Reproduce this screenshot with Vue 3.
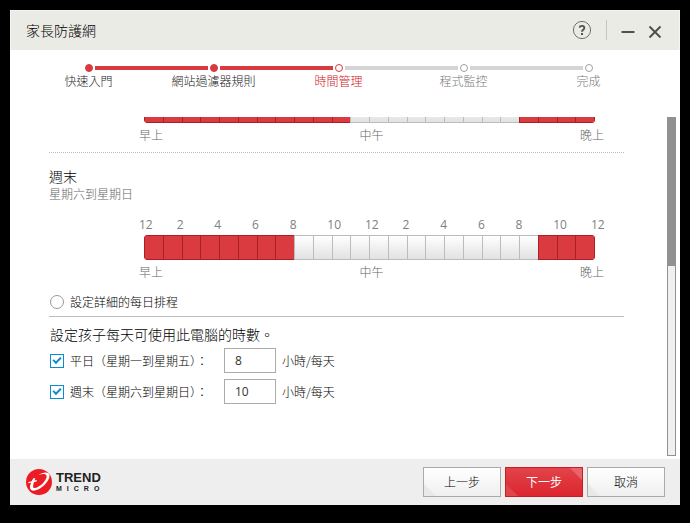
<script setup>
import { ref } from 'vue'

const steps = [
  { label: '快速入門', state: 'done' },
  { label: '網站過濾器規則', state: 'done' },
  { label: '時間管理', state: 'current' },
  { label: '程式監控', state: 'todo' },
  { label: '完成', state: 'todo' },
]

const hourMarks = [12, 2, 4, 6, 8, 10, 12, 2, 4, 6, 8, 10, 12]
const dayMarks = ['早上', '中午', '晚上']

// each slot is one hour, true = blocked
const makeSlots = (from, to) => Array.from({ length: 24 }, (_, h) => h < from || h >= to)

const weekdaySlots = ref(makeSlots(11, 20))
const weekendSlots = ref(makeSlots(8, 21))

const scheduleMode = ref('simple')
const limits = ref([
  { id: 'weekday', label: '平日（星期一到星期五）：', enabled: true, hours: '8' },
  { id: 'weekend', label: '週末（星期六到星期日）：', enabled: true, hours: '10' },
])

function toggle(slots, i) {
  slots[i] = !slots[i]
}
</script>

<template>
  <div class="screen">
    <main class="dialog" lang="zh-TW">
      <header class="titlebar">
        <h1 class="titlebar__title">家長防護網</h1>
        <button class="icon-btn icon-btn--help" aria-label="說明">
          <svg width="20" height="20" viewBox="0 0 20 20" fill="none" stroke="#505050">
            <circle cx="10" cy="10" r="8.6" stroke="#707070" stroke-width="1" />
            <path d="M7.5 7.6C8 5.2 12.3 5.3 12.3 7.9c0 1.8-2.3 1.8-2.3 3.9" stroke-width="1.9" />
            <path d="M10 12.9v2" stroke-width="2" />
          </svg>
        </button>
        <button class="icon-btn icon-btn--min" aria-label="最小化">
          <svg width="14" height="14" viewBox="0 0 14 14"><path d="M0.5 8h13" stroke="#505050" stroke-width="2" /></svg>
        </button>
        <button class="icon-btn" aria-label="關閉">
          <svg width="14" height="14" viewBox="0 0 14 14"><path d="M1.5 2.5l11 11M12.5 2.5l-11 11" stroke="#505050" stroke-width="2" /></svg>
        </button>
      </header>

      <ol class="steps">
        <li v-for="step in steps" :key="step.label" class="step" :class="`step--${step.state}`">
          <div class="step__track">
            <span class="step__line step__line--before" />
            <span class="step__dot" />
            <span class="step__line step__line--after" />
          </div>
          <span class="step__label">{{ step.label }}</span>
        </li>
      </ol>

      <div class="body">
        <div class="content">
          <section class="schedule schedule--weekday">
            <!-- scrolled: only the lower edge of this bar is in view -->
            <div class="schedule__clip">
              <div class="bar">
                <button
                  v-for="(blocked, i) in weekdaySlots"
                  :key="i"
                  class="bar__slot"
                  :class="{ 'bar__slot--blocked': blocked }"
                  :aria-label="`${i}:00`"
                  @click="toggle(weekdaySlots, i)"
                />
              </div>
            </div>
            <div class="day-marks">
              <span v-for="m in dayMarks" :key="m">{{ m }}</span>
            </div>
          </section>

          <section class="schedule schedule--weekend">
            <h2 class="schedule__title">週末</h2>
            <p class="schedule__days">星期六到星期日</p>
            <div class="hour-marks">
              <span v-for="(h, i) in hourMarks" :key="i" class="hour-marks__item">{{ h }}</span>
            </div>
            <div class="bar">
              <button
                v-for="(blocked, i) in weekendSlots"
                :key="i"
                class="bar__slot"
                :class="{ 'bar__slot--blocked': blocked }"
                :aria-label="`${i}:00`"
                @click="toggle(weekendSlots, i)"
              />
            </div>
            <div class="day-marks">
              <span v-for="m in dayMarks" :key="m">{{ m }}</span>
            </div>
          </section>

          <label class="mode">
            <input v-model="scheduleMode" class="radio" type="radio" value="detailed" />
            設定詳細的每日排程
          </label>

          <section class="limits">
            <h2 class="limits__title">設定孩子每天可使用此電腦的時數。</h2>
            <div v-for="limit in limits" :key="limit.id" class="limit">
              <input :id="limit.id" v-model="limit.enabled" class="check" type="checkbox" />
              <label class="limit__label" :for="limit.id">{{ limit.label }}</label>
              <input :id="`${limit.id}-hours`" v-model="limit.hours" class="limit__hours" type="text" />
              <label :for="`${limit.id}-hours`">小時/每天</label>
            </div>
          </section>
        </div>
        <div class="scrollbar"><div class="scrollbar__thumb" /></div>
      </div>

      <footer class="footer">
        <div class="brand">
          <svg width="26" height="26" viewBox="0 0 26 26">
            <circle cx="13" cy="13" r="13" fill="#ec1c24" />
            <path
              d="M2 13.2L5.6 12.2 7.4 9.2H9.3L8.6 11.6 11 11 10.5 12.4 8 13.2C6.6 17.2 6.8 19.4 9.4 18.9 14.6 18 21.3 10.6 20.6 6.8 20.2 4.6 16.2 4.7 12.4 6 16.8 3.2 22.5 2.5 23.4 5.8 24.7 11 15.6 20.8 8.6 21.6 3.6 22.1 3.1 18.6 5.2 13.6L2.4 14.3Z"
              fill="#fff"
            />
          </svg>
          <div class="brand__text">
            <span class="brand__name">TREND</span>
            <span class="brand__sub">MICRO</span>
          </div>
        </div>
        <button class="btn">上一步</button>
        <button class="btn btn--primary">下一步</button>
        <button class="btn">取消</button>
      </footer>
    </main>
  </div>
</template>

<style>
body {
  background: #000;
}
</style>

<style scoped>
.screen {
  display: flex;
  box-sizing: border-box;
  min-height: 100vh;
  padding: 10px 10px 18px;
}

.dialog {
  display: flex;
  flex: 1;
  flex-direction: column;
  min-width: 0;
  background: #fff;
  color: #000;
  font: 12px/16px "Noto Sans CJK TC", sans-serif;
  font-weight: 300;
}

h1, h2, p, ol {
  margin: 0;
  padding: 0;
  font-weight: inherit;
}

button, input {
  box-sizing: border-box;
  margin: 0;
  padding: 0;
  font: inherit;
  color: inherit;
}

/* Title bar */
.titlebar {
  display: flex;
  align-items: center;
  box-sizing: border-box;
  height: 40px;
  padding: 0 17px 2px 15px;
  border: 1px solid #f4f4f1;
  border-bottom: 0;
  background: #ebebe6;
}
.titlebar__title {
  flex: 1;
  font-size: 14px;
  line-height: 20px;
}
.icon-btn {
  display: flex;
  border: 0;
  background: none;
}
.icon-btn--help {
  padding-right: 14px;
}
.icon-btn--min {
  margin-right: 13px;
  padding: 4px 0 2px 14px;
  border-left: 1px solid #c4c4c0;
}
.icon-btn:last-child {
  padding-top: 2px;
}

/* Steps */
.steps {
  display: flex;
  padding: 14px 29px 28px 16px;
  list-style: none;
}
.step {
  flex: 1;
  color: #777;
  text-align: center;
}
.step__track {
  display: flex;
  align-items: center;
  gap: 2px;
  height: 8px;
}
.step__line {
  flex: 1;
  height: 4px;
  background: #d5d5d5;
}
.step__dot {
  box-sizing: border-box;
  width: 8px;
  height: 8px;
  border: 1px solid #a0a0a0;
  border-radius: 50%;
}
.step__label {
  display: block;
  margin-top: 1px;
}
.step--done { color: #222; }
.step--current { color: #d0161d; }
.step--done .step__line,
.step--current .step__line--before {
  background: #d93a3f;
}
.step--done .step__dot {
  border-color: #d93a3f;
  background: #d93a3f;
}
.step--current .step__dot { border-color: #d93a3f; }
.step:first-child .step__line--before,
.step:last-child .step__line--after {
  visibility: hidden;
}

/* Body */
.body {
  display: flex;
  flex: 1;
  padding: 0 4px 3px 39px;
}
.content {
  flex: 1;
  min-width: 0;
  margin-right: 43px;
}
.scrollbar {
  box-sizing: border-box;
  width: 9px;
  border: 1px solid #919191;
  background: #f0f0f0;
}
.scrollbar__thumb {
  height: 44%;
  background: #919191;
}

/* Schedules */
.schedule--weekday {
  padding-bottom: 9px;
  border-bottom: 1px dotted #bbb;
}
.schedule--weekend {
  padding-top: 13px;
}
.schedule__clip {
  display: flex;
  align-items: flex-end;
  height: 6px;
  overflow: hidden;
}
.schedule__clip .bar { flex: 1; }
.schedule__title {
  font-size: 14px;
  line-height: 20px;
}
.schedule__days { color: #666; }

.bar {
  display: flex;
  box-sizing: border-box;
  height: 25px;
  margin: 0 29px 0 95px;
  border-radius: 4px;
  overflow: hidden;
}
.bar__slot {
  flex: 1;
  border: solid #bcbcbc;
  border-width: 1px 0 1px 1px;
  background: linear-gradient(#fff, #e2e2e2);
}
.bar__slot:last-child { border-right-width: 1px; }
.bar__slot--blocked {
  border-color: #ab1f26;
  background: #d93b40;
}

.hour-marks {
  display: flex;
  margin: 15px 33px 2px 90px;
  color: #808080;
  font-family: "Open Sans", sans-serif;
  font-weight: 400;
}
.hour-marks__item {
  flex: 0 0 calc(100% / 12);
}
.day-marks {
  display: flex;
  justify-content: space-between;
  margin: 4px 20px 0 90px;
  color: #666;
}

.mode {
  display: flex;
  align-items: center;
  gap: 6px;
  margin-top: 14px;
  padding: 0 0 6px 1px;
  border-bottom: 1px solid #bdbdbd;
}
.radio {
  width: 14px;
  height: 14px;
  border: 1px solid #999;
  border-radius: 50%;
  appearance: none;
  background: #fff;
}
.radio:checked {
  background: radial-gradient(#0d8bd0 40%, #fff 45%);
}

/* Limits */
.limits {
  padding-left: 1px;
}
.limits__title {
  margin: 7px 0 4px;
  font-size: 14px;
  line-height: 20px;
}
.limit {
  display: flex;
  align-items: center;
  gap: 6px;
  margin-bottom: 6px;
}
.limit__label { width: 148px; }
.limit__hours {
  width: 52px;
  height: 25px;
  padding-left: 10px;
  border: 1px solid #ababab;
  background: #fff;
  font-family: "Open Sans", sans-serif;
  font-weight: 400;
  color: #333;
}
.check {
  display: grid;
  place-items: center;
  width: 14px;
  height: 14px;
  border: 1px solid #0d8bd0;
  appearance: none;
  background: #fff;
}
.check:checked::after {
  content: "";
  width: 6px;
  height: 3px;
  margin-bottom: 2px;
  border: solid #0d8bd0;
  border-width: 0 0 2px 2px;
  transform: rotate(-45deg);
}

/* Footer */
.footer {
  display: flex;
  align-items: center;
  gap: 4px;
  height: 46px;
  padding: 0 15px 0 16px;
  background: #eee;
}
.brand {
  display: flex;
  flex: 1;
  align-items: center;
  gap: 4px;
}
.brand__text {
  display: flex;
  flex-direction: column;
  color: #222;
  font-family: "Liberation Sans", sans-serif;
  font-weight: 700;
}
.brand__name {
  font-size: 13px;
  line-height: 14px;
}
.brand__sub {
  font-size: 7px;
  line-height: 8px;
  letter-spacing: 5px;
}
.btn {
  width: 78px;
  height: 30px;
  border: 1px solid #aaa;
  background:
    linear-gradient(45deg, #e9e9e9 8px, transparent 9px),
    linear-gradient(#fff, #efefef);
}
.btn--primary {
  border-color: #c41f27;
  background:
    linear-gradient(225deg, #e8636a 8px, transparent 9px),
    linear-gradient(45deg, #e0454b 8px, transparent 9px),
    linear-gradient(#e3434a, #dc262e);
  color: #fff;
  font-weight: 400;
}
</style>
